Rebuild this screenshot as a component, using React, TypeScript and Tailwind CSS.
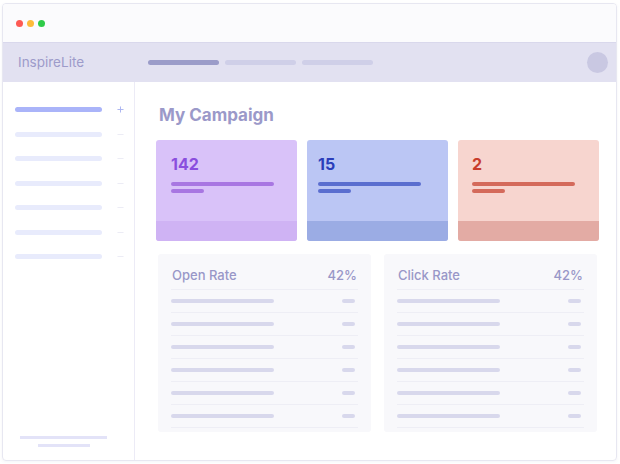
import { Plus, Minus } from 'lucide-react'

const stats = [
    { value: '142', pad: 'pl-[15px]', bg: 'bg-[#d9c2f9]', foot: 'bg-[#cfb3f4]', text: 'text-[#8a4ede]', bar: 'bg-[#a876e2]' },
    { value: '15', pad: 'pl-[11px]', bg: 'bg-[#bbc6f4]', foot: 'bg-[#9bace4]', text: 'text-[#2b3dba]', bar: 'bg-[#5a6ecf]' },
    { value: '2', pad: 'pl-[14px]', bg: 'bg-[#f7d5cf]', foot: 'bg-[#e3aba4]', text: 'text-[#c83d2d]', bar: 'bg-[#d46a5b]' },
]

function RateCard({ title }: { title: string }) {
    return (
        <div className="h-[178px] rounded-[3px] bg-[#f8f8fb] px-[13px] pt-[8px]">
            <div className="flex h-[27px] items-center justify-between px-[1px] text-[13px] font-medium text-[#9997c8]">
                <span>{title}</span>
                <span>42%</span>
            </div>
            <div className="border-b border-[#eeeef5]">
                {[0, 1, 2, 3, 4, 5].map((i) => (
                    <div key={i} className="flex h-[23px] items-center justify-between border-t border-[#eeeef5]">
                        <div className="h-[4px] w-[103px] rounded-full bg-[#d8d8ec]" />
                        <div className="mr-[3px] h-[4px] w-[13px] rounded-full bg-[#d8d8ec]" />
                    </div>
                ))}
            </div>
        </div>
    )
}

export default function App() {
    return (
        <div className="h-[464px] w-[620px] bg-white font-['Inter',sans-serif]">
            <div className="ml-[2px] flex h-[458px] w-[615px] translate-y-[3px] flex-col overflow-hidden rounded-[4px] border border-[#e7e7f1] shadow-[0_1px_3px_rgba(120,120,170,0.08)]">
                {/* title bar */}
                <div className="flex h-[39px] shrink-0 items-center gap-[4px] border-b border-[#d9d8ec] bg-[#fbfbfd] pl-[13px]">
                    <span className="h-[7px] w-[7px] rounded-full bg-[#fd5a54]" />
                    <span className="h-[7px] w-[7px] rounded-full bg-[#fdbb3a]" />
                    <span className="h-[7px] w-[7px] rounded-full bg-[#2fcb49]" />
                </div>

                {/* nav */}
                <div className="flex h-[39px] shrink-0 items-center bg-[#e2e1f1] pl-[15px] pr-[8px]">
                    <div className="w-[130px] text-[13.5px] text-[#9d9bca]">InspireLite</div>
                    <div className="flex gap-[6px]">
                        <div className="h-[5px] w-[71px] rounded-full bg-[#9b9cc9]" />
                        <div className="h-[5px] w-[71px] rounded-full bg-[#cfcfe8]" />
                        <div className="h-[5px] w-[71px] rounded-full bg-[#cfcfe8]" />
                    </div>
                    <div className="ml-auto h-[21px] w-[21px] rounded-full bg-[#c9c8e2]" />
                </div>

                <div className="flex min-h-0 flex-1">
                    {/* sidebar */}
                    <div className="flex w-[132px] shrink-0 flex-col border-r border-[#ecebf6] pb-[13px] pl-[12px] pt-[25px]">
                        <div className="flex h-[5px] items-center">
                            <div className="h-[5px] w-[87px] rounded-full bg-[#aab4f9]" />
                            <Plus className="ml-[14px] h-[9px] w-[9px] text-[#a9b2f0]" strokeWidth={2.5} />
                        </div>
                        {[0, 1, 2, 3, 4, 5].map((i) => (
                            <div key={i} className="mt-[19.5px] flex h-[5px] items-center">
                                <div className="h-[5px] w-[87px] rounded-full bg-[#e8ebfc]" />
                                <Minus className="ml-[14px] h-[9px] w-[9px] text-[#e6e6f2]" strokeWidth={2} />
                            </div>
                        ))}
                        <div className="mt-auto flex flex-col gap-[5px]">
                            <div className="ml-[5px] h-[3px] w-[87px] bg-[#e3e3f8]" />
                            <div className="ml-[23px] h-[3px] w-[52px] bg-[#e3e3f8]" />
                        </div>
                    </div>

                    {/* main */}
                    <div className="flex-1 pl-[21px] pr-[17px] pt-[22px]">
                        <h1 className="pl-[3px] text-[17px] font-bold leading-[22px] text-[#9b99c9]">My Campaign</h1>
                        <div className="mt-[14px] grid grid-cols-3 gap-[10px]">
                            {stats.map((s) => (
                                <div key={s.value} className={`flex h-[101px] flex-col overflow-hidden rounded-[3px] ${s.bg}`}>
                                    <div className={`flex-1 pt-[13px] ${s.pad}`}>
                                        <div className={`text-[16px] font-bold leading-[22px] ${s.text}`}>{s.value}</div>
                                        <div className={`mt-[7px] h-[4px] w-[103px] rounded-full ${s.bar}`} />
                                        <div className={`mt-[3px] h-[4px] w-[33px] rounded-full ${s.bar}`} />
                                    </div>
                                    <div className={`h-[20px] ${s.foot}`} />
                                </div>
                            ))}
                        </div>
                        <div className="mt-[13px] grid grid-cols-2 gap-[13px] px-[2px]">
                            <RateCard title="Open Rate" />
                            <RateCard title="Click Rate" />
                        </div>
                    </div>
                </div>
            </div>
        </div>
    )
}
